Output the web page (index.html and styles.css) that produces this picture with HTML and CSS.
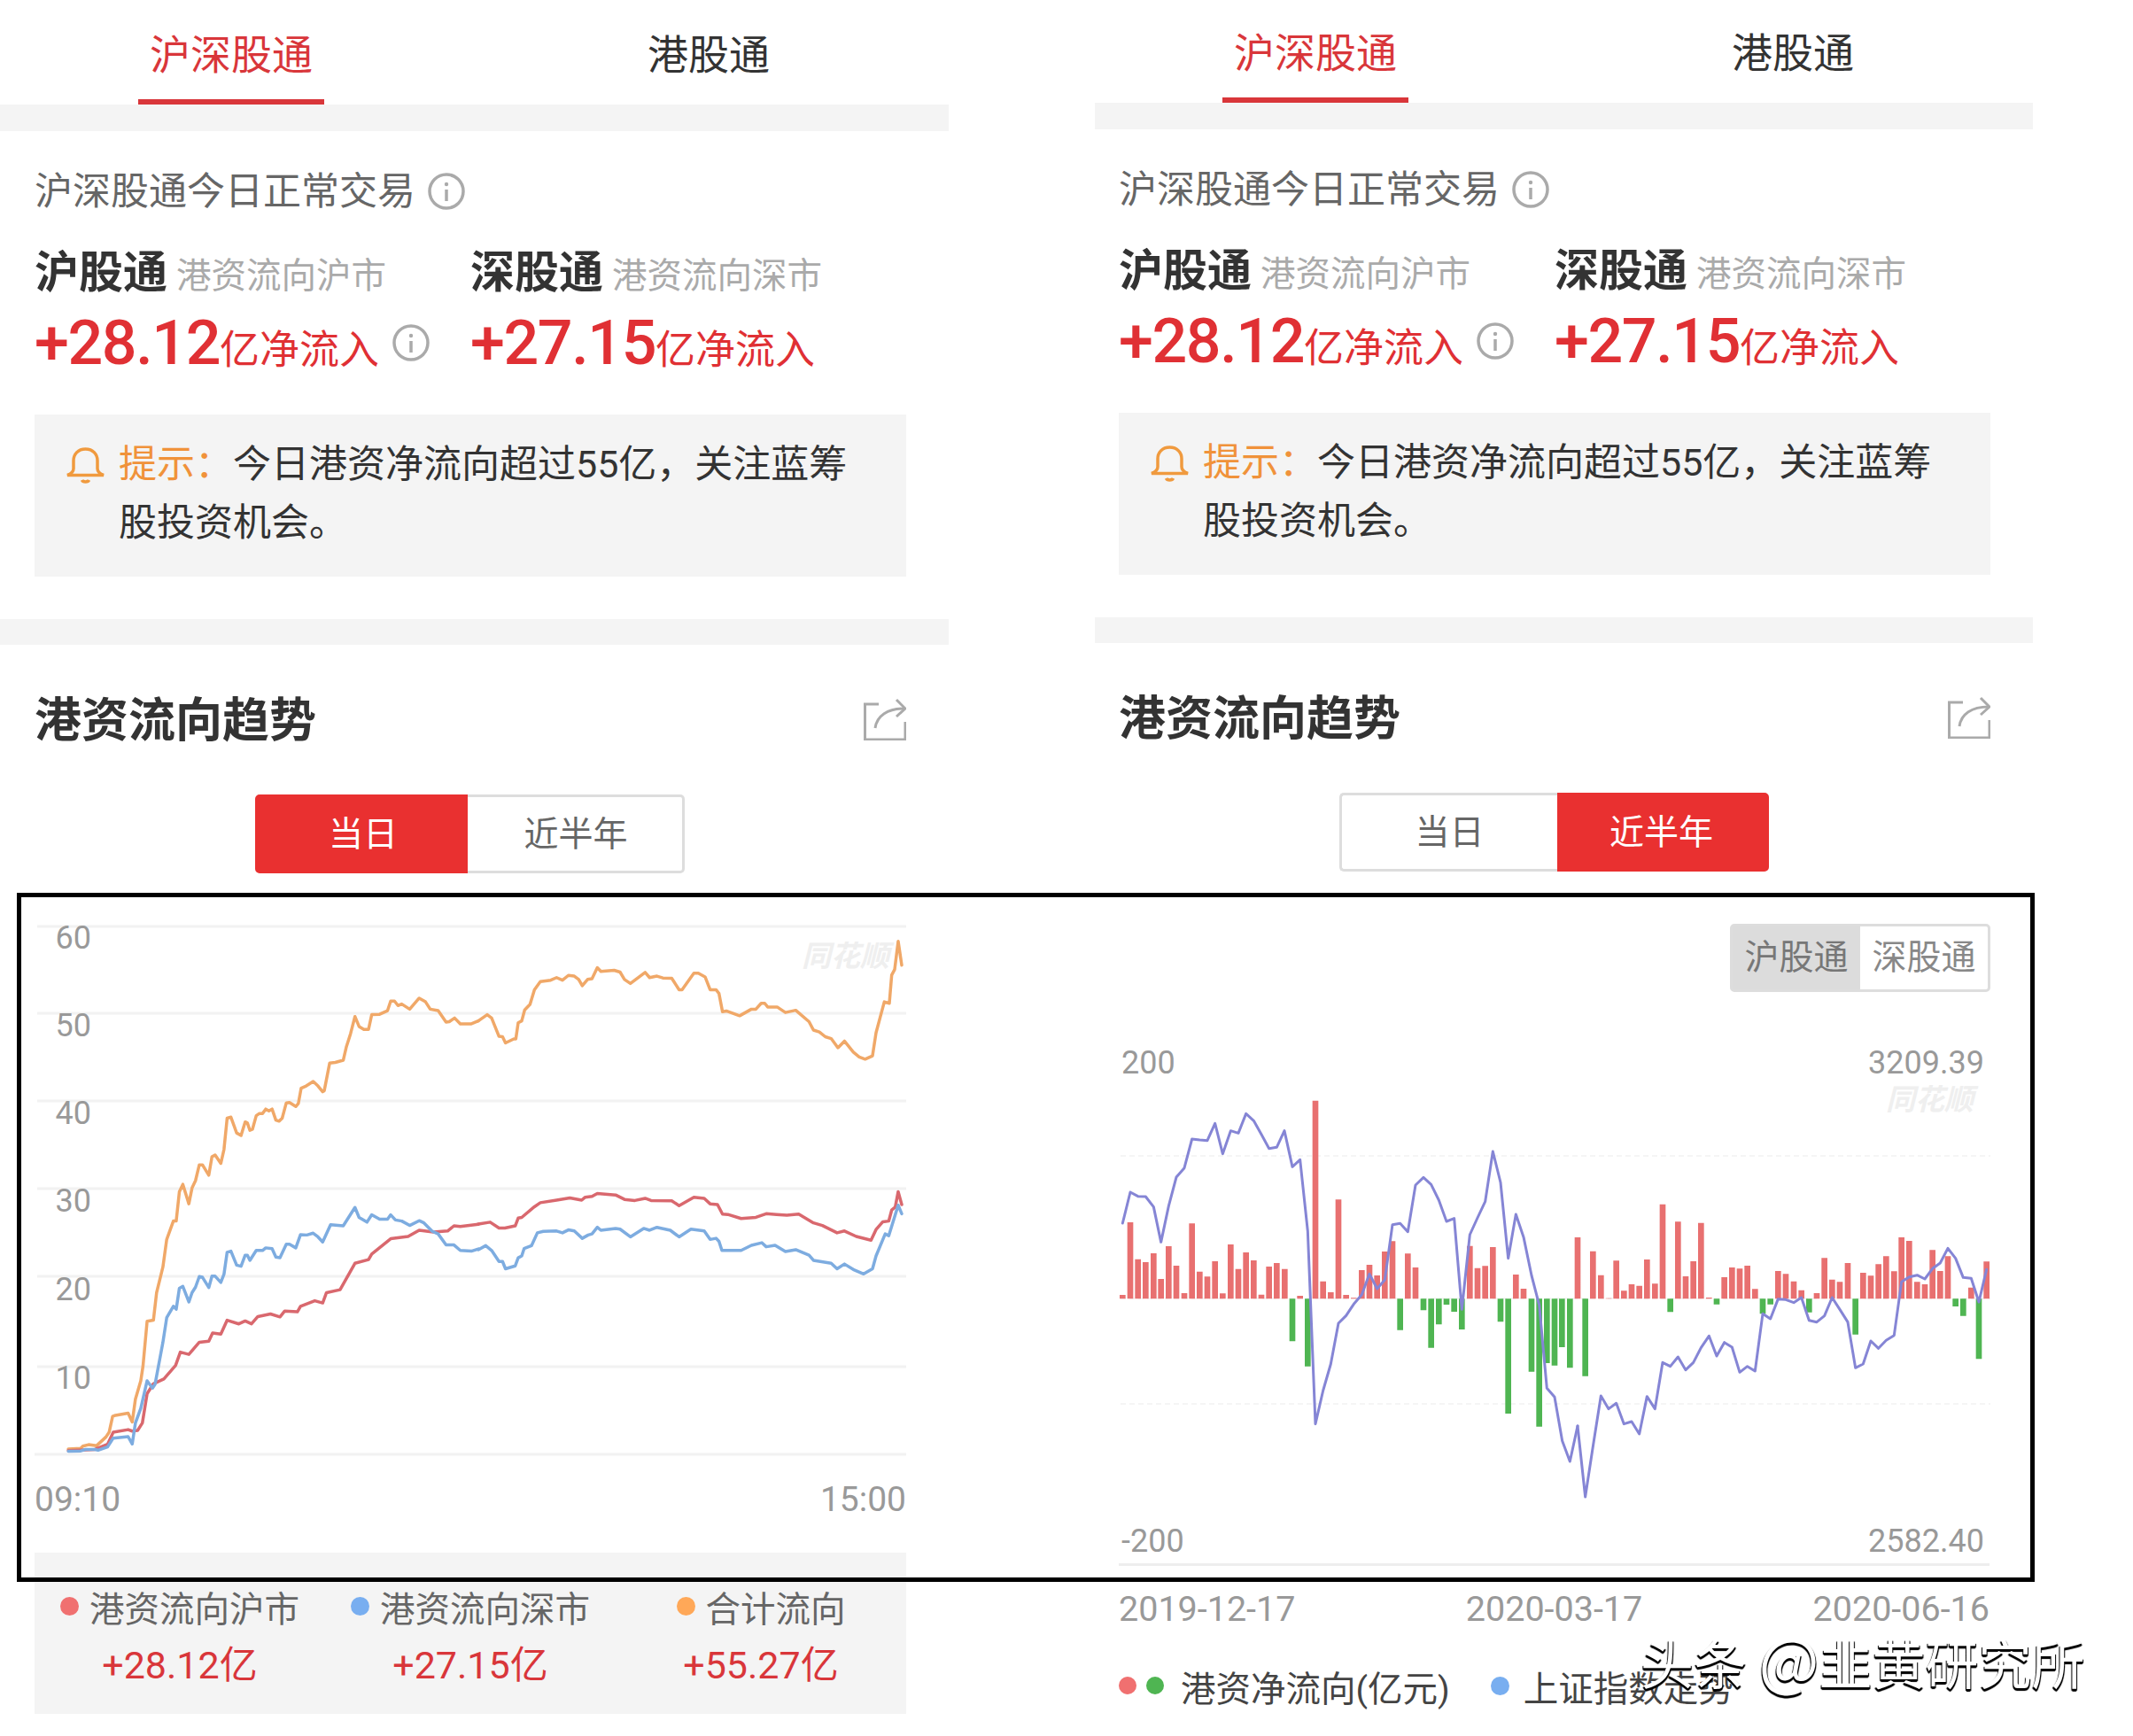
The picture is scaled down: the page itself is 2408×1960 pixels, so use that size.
FILE: index.html
```html
<!DOCTYPE html>
<html lang="zh-CN">
<head>
<meta charset="utf-8">
<title>沪深股通 港资流向趋势</title>
<link rel="stylesheet" href="styles.css">
</head>
<body>
<main class="page">
  <section class="panel panel-left">
    <nav class="tabs"><span class="tab tab-on">沪深股通</span><span class="tab">港股通</span></nav>
    <div class="band"></div>
    <div class="status"><span>沪深股通今日正常交易</span>
      <svg class="info" viewBox="0 0 42 42"><circle cx="21" cy="21" r="19"/><circle class="dot" cx="21" cy="13" r="2.2"/><path d="M21 19v13"/></svg>
    </div>
    <div class="stats">
      <div class="stat">
        <div class="stat-head"><b>沪股通</b><span>港资流向沪市</span></div>
        <div class="stat-val"><strong>+28.12</strong><span>亿净流入</span>
          <svg class="info info-val" viewBox="0 0 42 42"><circle cx="21" cy="21" r="19"/><circle class="dot" cx="21" cy="13" r="2.2"/><path d="M21 19v13"/></svg>
        </div>
      </div>
      <div class="stat">
        <div class="stat-head"><b>深股通</b><span>港资流向深市</span></div>
        <div class="stat-val"><strong>+27.15</strong><span>亿净流入</span></div>
      </div>
    </div>
    <div class="tip">
      <svg class="bell" viewBox="0 0 45 42"><path d="M22.500 3C14 3 9 9 9 16v9c0 3-3 6-7 7.500h41c-4-1.500-7-4.500-7-7.500v-9C36 9 31 3 22.500 3Z"/><path d="M18.500 38c1 2.500 7 2.500 8 0"/></svg>
      <p><em>提示：</em>今日港资净流向超过55亿，关注蓝筹股投资机会。</p>
    </div>
    <div class="band band-2"></div>
    <div class="title-row"><h2>港资流向趋势</h2>
      <svg class="share" viewBox="0 0 48 48"><path d="M17 7H1.500V47H47V27"/><path d="M13 34C15 20 27 12 46 12"/><path d="M37 2l10 10-10 9"/></svg>
    </div>
    <div class="seg"><span class="seg-a seg-on">当日</span><span class="seg-b">近半年</span></div>
    <svg class="chart-left" viewBox="0 986 1071 767">
      <g class="grid">
        <path d="M42 1046H1023M42 1144H1023M42 1243H1023M42 1342H1023M42 1441H1023M42 1543H1023M39 1642H1023"/>
      </g>
      <g class="axis-num">
        <text x="103" y="1071">60</text><text x="103" y="1170">50</text><text x="103" y="1269">40</text><text x="103" y="1368">30</text><text x="103" y="1468">20</text><text x="103" y="1568">10</text>
      </g>
      <text class="axis-time" x="39" y="1706">09:10</text>
      <text class="axis-time end" x="1023" y="1706">15:00</text>
      <text class="mark" x="905" y="1091">同花顺</text>
      <g transform="translate(0 1020) scale(.35714 .41459)">
        <polyline class="ln ln-o" points="216,1486 255,1484 262,1478 280,1474 305,1477 335,1453 345,1440 356,1397 365,1394 405,1388 418,1412 428,1350 445,1300 452,1260 465,1138 485,1135 495,1060 515,990 527,915 548,865 557,865 567,785 578,765 597,818 607,775 618,755 630,712 640,712 660,740 670,690 680,685 698,708 708,670 718,585 730,582 748,625 762,632 775,595 782,598 790,618 798,615 810,578 820,572 830,572 840,560 850,565 860,560 872,590 882,593 892,585 905,543 915,542 935,553 943,545 952,503 968,497 990,485 1005,497 1020,513 1025,510 1042,435 1060,433 1085,427 1095,390 1108,355 1122,308 1135,335 1150,343 1165,343 1175,303 1200,302 1225,292 1235,266 1247,266 1258,278 1270,274 1295,288 1325,258 1345,268 1360,288 1385,292 1410,323 1420,322 1437,312 1455,328 1490,328 1512,320"/>
        <polyline class="ln ln-r" points="216,1490 270,1488 300,1487 340,1473 358,1440 405,1433 418,1437 435,1435 450,1415 465,1335 485,1308 518,1295 555,1258 570,1222 597,1228 630,1195 660,1192 672,1170 698,1173 718,1135 755,1145 775,1137 795,1145 815,1125 855,1118 885,1126 900,1110 940,1112 950,1097 995,1082 1020,1088 1032,1060 1075,1052 1122,980 1165,970 1175,955 1235,913 1290,907 1325,890 1370,895 1415,892 1435,878 1455,880 1512,874"/>
        <polyline class="ln ln-b" points="216,1492 255,1491 270,1487 300,1487 310,1489 340,1480 358,1456 405,1452 418,1472 428,1415 445,1375 465,1300 482,1320 490,1310 515,1195 527,1128 548,1097 557,1105 567,1048 578,1043 597,1085 607,1060 618,1045 630,1016 640,1018 660,1046 670,1015 680,1015 698,1032 708,1010 718,950 730,947 748,985 762,988 775,958 782,958 790,972 810,945 830,945 840,938 860,940 872,963 885,965 905,928 915,928 935,938 950,902 970,903 990,898 1005,908 1020,922 1045,875 1085,878 1122,828 1135,855 1160,868 1175,848 1200,860 1225,860 1235,848 1250,862 1270,865 1295,877 1325,864 1340,870 1365,892 1385,900 1410,930 1435,930 1455,945 1490,947 1512,941"/>
      </g>
      <g transform="translate(540 1020) scale(.33333 .41459)">
        <polyline class="ln ln-o" points="0,320 30,303 45,312 70,362 82,363 92,380 120,369 127,369 135,325 147,320 157,290 175,275 190,235 210,213 245,209 265,202 285,209 305,196 325,198 340,207 352,224 370,207 385,205 403,175 415,185 460,182 480,187 495,207 515,218 565,188 580,202 605,198 625,203 655,204 680,235 690,235 730,190 745,190 768,200 785,235 805,235 815,245 827,295 840,293 885,306 925,288 940,288 958,272 970,272 980,282 1012,282 1040,297 1075,291 1120,322 1135,345 1155,350 1175,363 1195,368 1218,393 1240,375 1270,405 1290,418 1310,424 1335,415 1347,352 1375,268 1392,272 1400,195 1410,180 1422,103 1434,168"/>
        <polyline class="ln ln-r" points="0,873 40,868 70,884 90,884 125,878 135,857 147,855 190,826 210,815 265,808 310,802 350,808 362,800 385,798 403,790 465,794 495,806 530,809 565,803 585,809 655,810 680,823 730,800 765,803 785,818 810,820 827,846 845,847 890,858 940,855 975,845 1010,847 1045,849 1085,846 1135,870 1165,877 1215,897 1240,892 1280,907 1330,917 1347,888 1370,867 1390,865 1400,835 1412,827 1422,785 1434,820"/>
        <polyline class="ln ln-b" points="0,943 25,932 45,945 70,975 82,975 92,995 125,987 135,965 147,960 155,940 180,932 200,897 220,893 265,892 285,897 305,889 325,892 352,912 372,903 385,900 403,882 415,890 465,885 480,887 515,908 560,885 580,890 605,882 650,890 680,908 720,887 765,892 785,915 805,912 815,920 825,945 890,945 925,931 960,924 975,935 1005,931 1040,948 1075,943 1120,958 1135,972 1195,980 1215,995 1240,982 1270,997 1305,1009 1335,995 1347,960 1378,900 1390,905 1422,822 1434,845"/>
      </g>
    </svg>
    <div class="flow-box">
      <div class="flow-col"><div class="flow-name"><i class="pt pt-r"></i>港资流向沪市</div><div class="flow-val">+28.12亿</div></div>
      <div class="flow-col"><div class="flow-name"><i class="pt pt-b"></i>港资流向深市</div><div class="flow-val">+27.15亿</div></div>
      <div class="flow-col"><div class="flow-name"><i class="pt pt-o"></i>合计流向</div><div class="flow-val">+55.27亿</div></div>
    </div>
  </section>

  <section class="panel panel-right">
    <nav class="tabs"><span class="tab tab-on">沪深股通</span><span class="tab">港股通</span></nav>
    <div class="band"></div>
    <div class="status"><span>沪深股通今日正常交易</span>
      <svg class="info" viewBox="0 0 42 42"><circle cx="21" cy="21" r="19"/><circle class="dot" cx="21" cy="13" r="2.2"/><path d="M21 19v13"/></svg>
    </div>
    <div class="stats">
      <div class="stat">
        <div class="stat-head"><b>沪股通</b><span>港资流向沪市</span></div>
        <div class="stat-val"><strong>+28.12</strong><span>亿净流入</span>
          <svg class="info info-val" viewBox="0 0 42 42"><circle cx="21" cy="21" r="19"/><circle class="dot" cx="21" cy="13" r="2.2"/><path d="M21 19v13"/></svg>
        </div>
      </div>
      <div class="stat">
        <div class="stat-head"><b>深股通</b><span>港资流向深市</span></div>
        <div class="stat-val"><strong>+27.15</strong><span>亿净流入</span></div>
      </div>
    </div>
    <div class="tip">
      <svg class="bell" viewBox="0 0 45 42"><path d="M22.500 3C14 3 9 9 9 16v9c0 3-3 6-7 7.500h41c-4-1.500-7-4.500-7-7.500v-9C36 9 31 3 22.500 3Z"/><path d="M18.500 38c1 2.500 7 2.500 8 0"/></svg>
      <p><em>提示：</em>今日港资净流向超过55亿，关注蓝筹股投资机会。</p>
    </div>
    <div class="band band-2"></div>
    <div class="title-row"><h2>港资流向趋势</h2>
      <svg class="share" viewBox="0 0 48 48"><path d="M17 7H1.500V47H47V27"/><path d="M13 34C15 20 27 12 46 12"/><path d="M37 2l10 10-10 9"/></svg>
    </div>
    <div class="seg"><span class="seg-c">当日</span><span class="seg-d seg-on">近半年</span></div>
    <div class="switch"><span class="switch-on">沪股通</span><span>深股通</span></div>
    <svg class="chart-right" viewBox="1236 1120 1059 648">
      <path class="dash" d="M1265 1305H2247M1265 1466H2247M1265 1585H2247"/>
      <path class="grid-solid" d="M1263 1766.500H2246"/>
      <g class="axis-num">
        <text class="start" x="1266" y="1212">200</text>
        <text x="2240" y="1212">3209.39</text>
        <text class="start" x="1266" y="1752">-200</text>
        <text x="2240" y="1752">2582.40</text>
      </g>
      <text class="mark" x="2129" y="1253">同花顺</text>
      <g transform="translate(1260 1220) scale(.33333)">
        <path class="bar-r" d="M22 726V739M48 480V739M74 605V739M100 615V739M127 585V739M152 672V739M178 561V739M204 627V739M231 720V739M257 484V739M283 647V739M309 664V739M335 612V739M361 721V739M388 555V739M414 638V739M440 582V739M466 609V739M492 725V739M518 630V739M544 618V739M571 638V739M623 729V739M675 68V739M701 680V739M727 717V739M753 403V739M779 726V739M805 736V739M832 642V739M858 624V739M884 660V739M910 579V739M936 544V739M988 586V739M1014 633V739M1198 560V739M1224 635V739M1250 628V739M1276 564V739M1354 657V739M1380 705V739"/>
        <path class="bar-g" d="M597 739V883M649 739V968M962 739V845M1041 739V778M1067 739V905M1093 739V826M1119 739V759M1145 739V783M1171 739V843M1302 739V817M1328 739V1128M1407 739V986M1433 739V1172M1459 739V957M1485 739V965"/>
      </g>
      <g transform="translate(1760 1220) scale(.33333)">
        <path class="bar-r" d="M63 531V739M115 578V739M142 659V739M168 737V739M194 610V739M220 712V739M246 690V739M272 695V739M298 606V739M325 688V739M351 419V739M403 478V739M429 663V739M455 612V739M481 482V739M508 735V739M560 666V739M586 633V739M612 637V739M638 627V739M664 706V739M742 645V739M768 655V739M795 680V739M821 710V739M873 720V739M899 601V739M925 674V739M951 682V739M978 618V739M1030 651V739M1056 661V739M1082 622V739M1108 595V739M1135 646V739M1160 531V739M1186 543V739M1213 682V739M1239 690V739M1265 574V739M1291 645V739M1317 595V739M1396 701V739M1448 613V739"/>
        <path class="bar-g" d="M10 739V903M37 739V973M89 739V1001M377 739V784M534 739V758M690 739V790M716 739V758M847 739V785M1004 739V860M1343 739V765M1369 739V797M1422 739V943"/>
      </g>
      <g transform="translate(1260 1220) scale(.33333)">
        <polyline class="ln-p" points="22,483 48,378 74,392 100,393 127,428 152,547 178,425 204,327 231,296 257,198 283,201 309,203 335,145 361,248 388,170 414,178 440,112 466,136 492,182 518,230 544,226 570,170 597,292 623,268 649,510 675,1163 701,1050 727,960 753,822 779,796 805,757 832,725 858,655 884,705 910,675 936,488 962,484 988,512 1014,354 1041,328 1067,352 1093,405 1119,477 1145,467 1171,775 1198,522 1224,465 1250,410 1276,240 1302,345 1328,602 1354,453 1380,530 1407,660 1433,760 1459,1042 1485,1072 1511,1220 1537,1290 1563,1170"/>
      </g>
      <g transform="translate(1760 1220) scale(.33333)">
        <polyline class="ln-p" points="63,1170 89,1410 115,1240 142,1068 168,1112 194,1093 220,1163 246,1155 272,1197 298,1070 325,1112 351,955 377,968 403,936 429,980 455,955 481,905 508,865 534,933 560,887 586,903 612,988 638,968 664,984 690,790 716,807 742,740 768,742 795,752 821,735 847,812 873,818 899,797 925,735 951,775 978,818 1004,973 1030,960 1056,882 1082,907 1108,880 1135,863 1160,682 1186,665 1213,659 1239,672 1265,637 1291,618 1317,568 1343,602 1369,667 1396,670 1422,750 1448,640"/>
      </g>
    </svg>
    <div class="dates"><span>2019-12-17</span><span>2020-03-17</span><span>2020-06-16</span></div>
    <div class="key">
      <i class="kd kd-r"></i><i class="kd kd-g"></i><span class="key-a">港资净流向(亿元)</span>
      <i class="kd kd-b"></i><span class="key-b">上证指数走势</span>
    </div>
  </section>
  <div class="frame"></div>
  <div class="credit">头条 <span class="credit-at">@</span>韭黄研究所</div>
</main>
</body>
</html>
```

FILE: styles.css
```css
* { box-sizing: border-box; }
html, body { margin: 0; padding: 0; background: #fff; }
body { font-family: Roboto, "Noto Sans CJK SC", sans-serif; color: #333; }
.page { position: relative; display: flex; align-items: flex-start; width: 2408px; height: 1960px; overflow: hidden; }

.panel { --inset: 39px; flex: none; display: flex; flex-direction: column; }
.panel-left { width: 1071px; }
.panel-right { --inset: 27px; width: 1059px; margin-left: 165px; margin-top: -2px; }

.tabs { display: flex; gap: 329px; height: 118px; padding-left: calc(var(--inset) + 117px); }
.tab { width: 210px; height: 118px; padding-top: 39px; font-size: 46px; line-height: 46px; text-align: center; color: #333; }
.tab-on { color: #d9363a; border-bottom: 6px solid #d9363a; }

.band { height: 30px; background: #f4f4f4; }
.band-2 { height: 29px; margin-top: 48px; }

.status { display: flex; align-items: center; gap: 14px; height: 42px; margin: 47px 0 0 var(--inset); font-size: 43px; line-height: 42px; color: #666; }
.info { flex: none; width: 42px; height: 42px; fill: none; stroke: #aaa; stroke-width: 3.500; }
.info .dot { fill: #aaa; stroke: none; }

.stats { display: grid; grid-template-columns: 492px 460px; margin: 43px 0 0 var(--inset); }
.stat-head { display: flex; align-items: baseline; gap: 10px; height: 56px; line-height: 56px; }
.stat-head b { font-size: 50px; font-weight: 700; color: #333; }
.stat-head span { font-size: 39.500px; color: #aaa; }
.stat-val { display: flex; align-items: baseline; height: 74px; margin-top: 14px; line-height: 74px; color: #e03034; }
.stat-val strong { font-size: 70px; font-weight: 500; letter-spacing: -1.400px; }
.stat-val span { font-size: 45px; }
.info-val { align-self: center; margin-left: 15px; }

.tip { display: flex; width: 984px; height: 183px; margin: 44px 0 0 var(--inset); padding: 23px 50px 0 35px; background: #f4f4f4; }
.bell { flex: none; width: 45px; height: 42px; margin: 13px 15px 0 0; fill: none; stroke: #f09a3e; stroke-width: 3.500; }
.tip p { margin: 0; font-size: 43px; line-height: 66px; color: #333; }
.tip em { font-style: normal; color: #f0923a; }

.title-row { display: flex; justify-content: space-between; align-items: center; width: 984px; height: 52px; margin: 58px 0 0 var(--inset); }
.title-row h2 { margin: 4px 0 0; font-size: 53px; line-height: 52px; font-weight: 700; color: #333; }
.share { flex: none; width: 48px; height: 48px; fill: none; stroke: #aaa; stroke-width: 3; }

.seg { display: flex; height: 89px; margin: 59px 0 0 calc(var(--inset) + 249px); font-size: 39px; line-height: 85px; color: #666; text-align: center; }
.seg span { border: 3px solid #ddd; }
.seg-a { width: 240px; padding-left: 4px; border-radius: 5px 0 0 5px; }
.seg-b { width: 245px; padding-left: 2px; border-left: 0 !important; border-radius: 0 5px 5px 0; }
.seg-c { width: 246px; border-right: 0 !important; border-radius: 5px 0 0 5px; }
.seg-d { width: 239px; padding-right: 4px; border-radius: 0 5px 5px 0; }
.seg .seg-on { background: #e93030; border-color: #e93030; color: #fff; }

.chart-left { display: block; width: 1071px; height: 767px; }
.grid path { stroke: #f2f2f2; stroke-width: 3; fill: none; }
.axis-num text { font-size: 36px; fill: #999; text-anchor: end; }
.axis-num .start { text-anchor: start; }
.axis-time { font-size: 39px; fill: #999; }
.axis-time.end { text-anchor: end; }
.mark { font-size: 33px; font-style: italic; font-weight: 700; fill: #efefef; }
.ln { fill: none; stroke-width: 3.500; vector-effect: non-scaling-stroke; stroke-linejoin: round; stroke-linecap: round; }
.ln-o { stroke: #f0a868; }
.ln-r { stroke: #d9686e; }
.ln-b { stroke: #7dace0; }

.flow-box { display: grid; grid-template-columns: repeat(3, 328px); width: 984px; height: 182px; margin-left: var(--inset); padding-top: 38px; background: #f4f4f4; }
.flow-col { display: flex; flex-direction: column; align-items: center; }
.flow-name { display: flex; align-items: center; height: 44px; font-size: 39.500px; color: #666; }
.flow-val { margin-top: 23px; height: 44px; font-size: 43px; line-height: 44px; color: #d9363a; }
.pt { flex: none; width: 21px; height: 21px; margin-right: 12px; border-radius: 50%; }
.pt-r { background: #f07070; }
.pt-b { background: #78aef0; }
.pt-o { background: #ffa858; }

.switch { display: flex; align-self: flex-end; width: 294px; height: 77px; margin: 59px 48px 0 0; border: 3px solid #ddd; border-radius: 5px; font-size: 39px; line-height: 71px; text-align: center; color: #888; }
.switch span { flex: 1; }
.switch .switch-on { flex: none; width: 144px; background: #dcdcdc; color: #777; }

.chart-right { display: block; width: 1059px; height: 648px; }
.dash { stroke: #f5f5f5; stroke-width: 2; stroke-dasharray: 6 4; fill: none; }
.grid-solid { stroke: #eee; stroke-width: 3; fill: none; }
.bar-r { stroke: #e87070; stroke-width: 20; fill: none; }
.bar-g { stroke: #4fb552; stroke-width: 20; fill: none; }
.ln-p { fill: none; stroke: #8585d5; stroke-width: 9; stroke-linejoin: round; stroke-linecap: round; }

.dates { display: flex; justify-content: space-between; width: 983px; margin: 27px 0 0 var(--inset); font-size: 39.500px; line-height: 44px; color: #999; }
.key { display: flex; align-items: center; height: 44px; margin: 42px 0 0 var(--inset); font-size: 39.500px; color: #444; }
.kd { flex: none; width: 20px; height: 20px; border-radius: 50%; }
.kd-r { background: #f07070; }
.kd-g { margin-left: 11px; background: #4fb552; }
.kd-b { margin-left: 46px; width: 21px; height: 21px; background: #78aef0; }
.key-a { margin-left: 19px; }
.key-b { margin-left: 16px; }

.frame { position: absolute; left: 19px; top: 1008px; width: 2278px; height: 778px; border: 5px solid #000; pointer-events: none; }
.credit { position: absolute; left: 1852px; top: 1833px; font-family: "Noto Sans CJK SC", sans-serif; font-size: 60px; line-height: 86px; color: #fff; text-shadow: 0 2px 1px #000, 0 3px 1px #000, 1px 2px 1px #000, -1px 2px 1px #000; white-space: nowrap; }
.credit-at { font-size: 72px; line-height: 60px; }
```
